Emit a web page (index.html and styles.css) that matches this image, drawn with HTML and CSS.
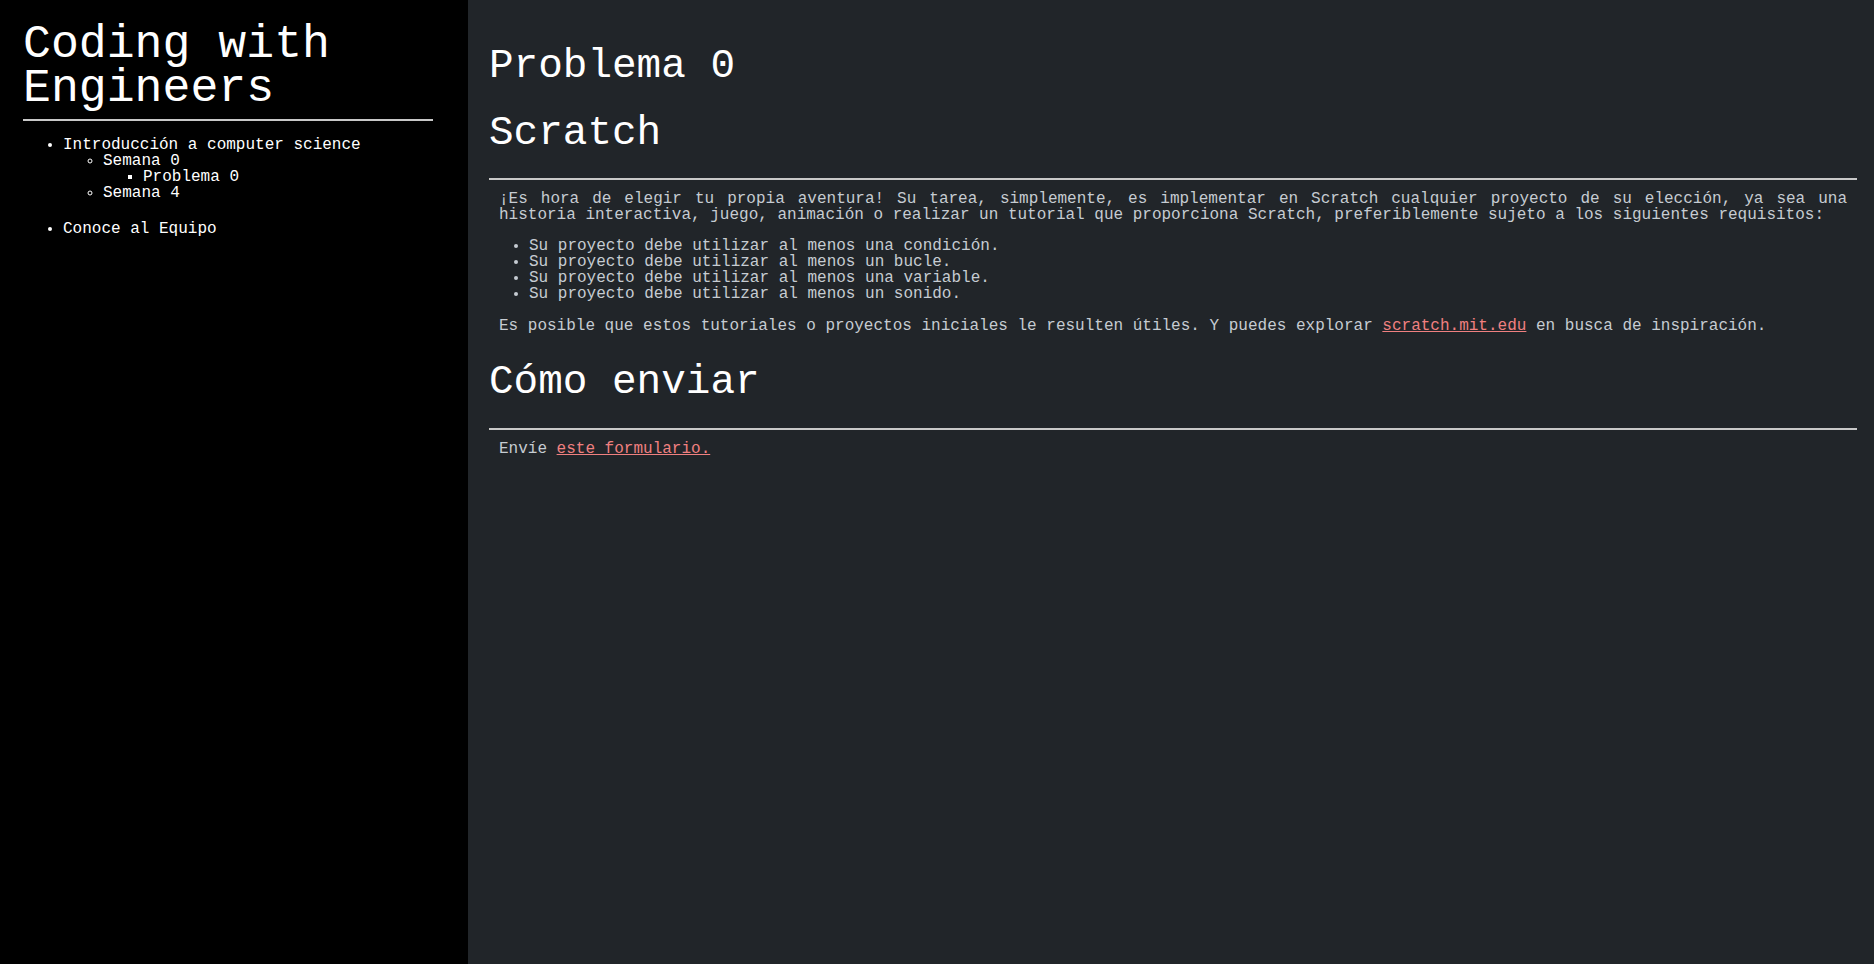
FILE: index.html
```html
<!DOCTYPE html>
<html lang="es">
<head>
<meta charset="utf-8">
<title>Problema 0 - Coding with Engineers</title>
<link rel="stylesheet" href="styles.css">
</head>
<body>
<div class="layout">
  <nav class="sidebar">
    <h1 class="site-title">Coding with Engineers</h1>
    <hr class="rule">
    <ul class="nav-list">
      <li><a href="#">Introducción a computer science</a>
        <ul>
          <li><a href="#">Semana 0</a>
            <ul>
              <li><a href="#">Problema 0</a></li>
            </ul>
          </li>
          <li><a href="#">Semana 4</a></li>
        </ul>
      </li>
    </ul>
    <ul class="nav-list nav-list-second">
      <li><a href="#">Conoce al Equipo</a></li>
    </ul>
  </nav>
  <main class="content">
    <h1 class="heading heading-first">Problema 0</h1>
    <h2 class="heading heading-second">Scratch</h2>
    <hr class="rule main-rule">
    <p class="text justify">¡Es hora de elegir tu propia aventura! Su tarea, simplemente, es implementar en Scratch cualquier proyecto de su elección, ya sea una historia interactiva, juego, animación o realizar un tutorial que proporciona Scratch, preferiblemente sujeto a los siguientes requisitos:</p>
    <ul class="req-list">
      <li>Su proyecto debe utilizar al menos una condición.</li>
      <li>Su proyecto debe utilizar al menos un bucle.</li>
      <li>Su proyecto debe utilizar al menos una variable.</li>
      <li>Su proyecto debe utilizar al menos un sonido.</li>
    </ul>
    <p class="text">Es posible que estos tutoriales o proyectos iniciales le resulten útiles. Y puedes explorar <a class="link" href="#">scratch.mit.edu</a> en busca de inspiración.</p>
    <h2 class="heading heading-third">Cómo enviar</h2>
    <hr class="rule main-rule main-rule-second">
    <p class="text text-last">Envíe <a class="link" href="#">este formulario.</a></p>
  </main>
</div>
</body>
</html>
```

FILE: styles.css
```css
html, body {
  margin: 0;
  padding: 0;
  height: 100%;
}

body {
  font-family: "Liberation Mono", "DejaVu Sans Mono", monospace;
  font-size: 16px;
  line-height: 16px;
  background: #212529;
}

.layout {
  display: flex;
  min-height: 100vh;
}

.sidebar {
  width: 468px;
  flex: 0 0 468px;
  box-sizing: border-box;
  background: #000;
  color: #fff;
  padding: 23px 35px 0 23px;
}

.site-title {
  margin: 0;
  font-size: 46.5px;
  line-height: 44px;
  font-weight: normal;
  color: #fff;
}

.rule {
  border: none;
  height: 2px;
  background: #c8c8c8;
  margin: 8px 0 0 0;
}

.nav-list {
  margin: 16px 0 0 0;
  padding-left: 40px;
}

.nav-list ul {
  margin: 0;
  padding-left: 40px;
}

.nav-list-second {
  margin-top: 20px;
}

.nav-list a {
  color: #fff;
  text-decoration: none;
}

.content {
  flex: 1;
  box-sizing: border-box;
  padding: 42px 17px 0 21px;
  color: #c6ccd2;
}

.heading {
  margin: 0;
  font-size: 41px;
  line-height: 48px;
  font-weight: normal;
  color: #fff;
}

.heading-second {
  margin-top: 19px;
}

.heading-third {
  margin-top: 24px;
}

.main-rule {
  margin-top: 21px;
}

.main-rule-second {
  margin-top: 22px;
}

.text {
  margin: 16px 0 0 0;
  padding: 0 10px;
}

.main-rule + .text {
  margin-top: 11px;
}

.justify {
  text-align: justify;
}

.req-list {
  margin: 15px 0 0 0;
  padding-left: 40px;
}

.link {
  color: #f08080;
  text-decoration: underline;
}
```
